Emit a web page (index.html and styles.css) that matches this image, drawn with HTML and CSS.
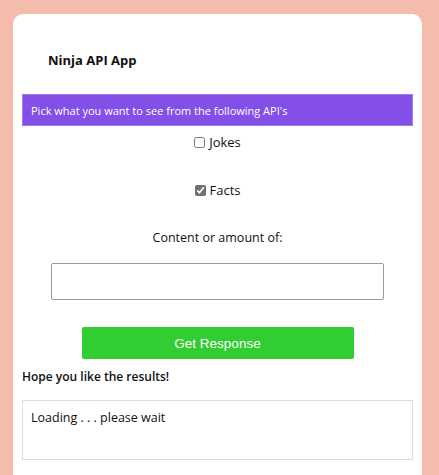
FILE: index.html
```html
<!DOCTYPE html>
<html>
<head>
<meta charset="utf-8">
<link rel="stylesheet" href="styles.css">
</head>
<body>
<div class="card">
  <h1 class="title">Ninja API App</h1>
  <div class="banner">Pick what you want to see from the following API's</div>
  <label class="option"><input type="checkbox" class="cb"> Jokes</label>
  <label class="option facts"><input type="checkbox" class="cb" checked> Facts</label>
  <div class="label">Content or amount of:</div>
  <div class="input-row"><input type="text" class="field"></div>
  <div class="btn-row"><button class="btn">Get Response</button></div>
  <div class="hope">Hope you like the results!</div>
  <div class="result">Loading . . . please wait</div>
</div>
</body>
</html>
```
FILE: styles.css
```css
html, body { margin: 0; padding: 0; }
body {
  background: #f4bcab;
  font-family: "Open Sans", "DejaVu Sans", sans-serif;
  color: #111;
  padding: 14px 0 0 13px;
  height: 475px;
  box-sizing: border-box;
  overflow: hidden;
}
.card {
  width: 409px;
  background: #fff;
  border-radius: 10px;
  padding: 36px 9px 20px;
  box-sizing: border-box;
  height: 480px;
}
.title {
  margin: 0 0 24px 26px;
  font-size: 13px;
  line-height: 20px;
  font-weight: 700;
}
.banner {
  height: 32px;
  box-sizing: border-box;
  background: #834fe6;
  border: 1px solid #a07cf0;
  color: #fff;
  font-size: 11px;
  display: flex;
  align-items: center;
  padding-left: 8px;
}
.option {
  display: flex;
  justify-content: center;
  align-items: center;
  height: 20px;
  margin-top: 6px;
  font-size: 13px;
}
.option.facts { margin-top: 28px; }
.cb {
  margin: 0 4px 0 0;
  width: 11px;
  height: 11px;
  accent-color: #707070;
}
.label {
  text-align: center;
  font-size: 12.5px;
  line-height: 20px;
  margin-top: 28px;
}
.input-row { display: flex; justify-content: center; margin-top: 15px; }
.field {
  width: 333px;
  height: 37px;
  box-sizing: border-box;
  border: 1px solid #9a9a9a;
  border-radius: 2px;
  margin: 0;
}
.btn-row { display: flex; justify-content: center; margin-top: 27px; }
.btn {
  width: 272px;
  height: 32px;
  margin: 0;
  background: #32cd32;
  border: none;
  border-radius: 2px;
  color: #fff;
  font-family: "Liberation Sans", Arial, sans-serif;
  font-size: 13.5px;
}
.hope {
  margin-top: 8px;
  font-size: 12px;
  font-weight: 650;
  line-height: 20px;
}
.result {
  margin-top: 13px;
  height: 60px;
  box-sizing: border-box;
  border: 1px solid #dcdcdc;
  padding: 8px 8px;
  font-size: 12.5px;
  line-height: 18px;
}
```
